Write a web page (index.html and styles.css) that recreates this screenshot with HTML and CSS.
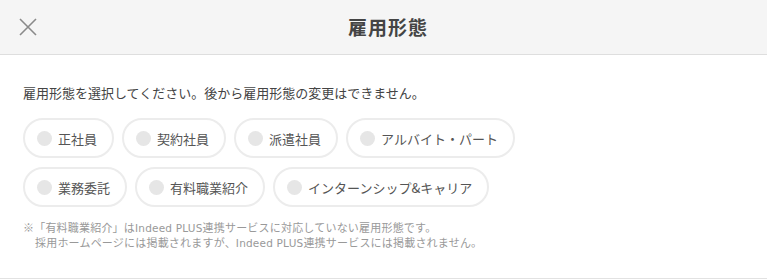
FILE: index.html
```html
<!DOCTYPE html>
<html lang="ja">
<head>
<meta charset="utf-8">
<title>雇用形態</title>
<link rel="stylesheet" href="styles.css">
</head>
<body>
<div class="modal">
  <header class="modal-header">
    <button class="close-btn" aria-label="閉じる">
      <svg width="18" height="18" viewBox="0 0 18 18"><path d="M1 1L17 17M17 1L1 17" stroke="#8a8a8a" stroke-width="1.6" fill="none"/></svg>
    </button>
    <h1 class="modal-title">雇用形態</h1>
  </header>
  <section class="modal-body">
    <p class="description">雇用形態を選択してください。後から雇用形態の変更はできません。</p>
    <div class="options">
      <label class="option"><span class="radio"></span><span class="option-label">正社員</span></label>
      <label class="option"><span class="radio"></span><span class="option-label">契約社員</span></label>
      <label class="option"><span class="radio"></span><span class="option-label">派遣社員</span></label>
      <label class="option"><span class="radio"></span><span class="option-label">アルバイト・パート</span></label>
      <label class="option"><span class="radio"></span><span class="option-label">業務委託</span></label>
      <label class="option"><span class="radio"></span><span class="option-label">有料職業紹介</span></label>
      <label class="option"><span class="radio"></span><span class="option-label">インターンシップ&amp;キャリア</span></label>
    </div>
    <div class="note">
      <p class="note-line">※「有料職業紹介」は<span class="latin">Indeed PLUS</span>連携サービスに対応していない雇用形態です。</p>
      <p class="note-line note-indent">採用ホームページには掲載されますが、<span class="latin">Indeed PLUS</span>連携サービスには掲載されません。</p>
    </div>
  </section>
</div>
</body>
</html>
```

FILE: styles.css
```css
html, body {
  margin: 0;
  padding: 0;
  background: #ffffff;
}

body {
  font-family: "Noto Sans CJK JP", "Noto Sans", sans-serif;
  color: #444;
}

.modal-header {
  height: 54px;
  background: #f5f5f5;
  border-bottom: 1px solid #dedede;
  display: flex;
  align-items: center;
  position: relative;
}

.close-btn {
  position: absolute;
  left: 18px;
  top: 17px;
  width: 19px;
  height: 19px;
  padding: 0;
  border: 0;
  background: transparent;
  display: flex;
  align-items: center;
  justify-content: center;
}

.modal-title {
  flex: 1;
  margin: 0;
  padding-left: 9px;
  text-align: center;
  font-size: 19px;
  font-weight: 700;
  letter-spacing: 1px;
  color: #444;
  line-height: 24px;
}

.modal-body {
  padding: 28px 23px 28px;
  border-bottom: 1px solid #e2e2e2;
  height: 167px;
}

.description {
  margin: 0;
  font-size: 13px;
  line-height: 20px;
  color: #444;
}

.options {
  margin-top: 15px;
  max-width: 520px;
  display: flex;
  flex-wrap: wrap;
  gap: 9px 8px;
}

.option {
  display: flex;
  align-items: center;
  height: 40px;
  box-sizing: border-box;
  border: 2px solid #ececec;
  border-radius: 20px;
  padding: 0 15px 0 12px;
  background: #fff;
}

.radio {
  width: 15px;
  height: 15px;
  border-radius: 50%;
  background: #e6e6e6;
  margin-right: 6px;
  flex-shrink: 0;
}

.option-label {
  font-size: 13px;
  color: #555;
  white-space: nowrap;
}

.note {
  margin-top: 13px;
  font-size: 11px;
  color: #999;
  letter-spacing: 0.2px;
}

.note-line {
  margin: 0;
  line-height: 14px;
  white-space: nowrap;
}

.latin {
  font-family: "DejaVu Sans", "Noto Sans", sans-serif;
  font-size: 10.5px;
}

.note-indent {
  padding-left: 12px;
}
```
